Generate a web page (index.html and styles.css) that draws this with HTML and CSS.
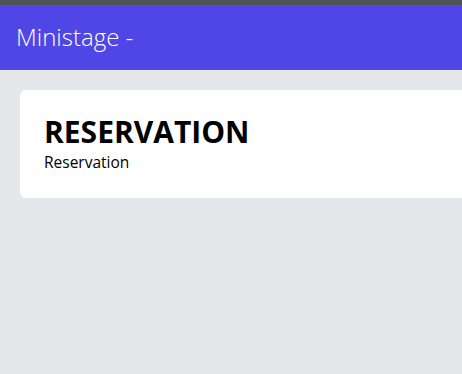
FILE: index.html
```html
<!DOCTYPE html>
<html>
<head>
<meta charset="utf-8">
<link rel="stylesheet" href="styles.css">
</head>
<body>
<div class="topbar"></div>
<header class="header">
  <h1 class="brand">Ministage -</h1>
</header>
<main class="main">
  <section class="card">
    <h2 class="card-title">RESERVATION</h2>
    <p class="card-sub">Reservation</p>
  </section>
</main>
</body>
</html>
```
FILE: styles.css
```css
html, body {
  margin: 0;
  padding: 0;
}
body {
  width: 462px;
  height: 374px;
  overflow: hidden;
  background: #e5e7eb;
  font-family: "Open Sans", "Noto Sans", sans-serif;
  color: #000;
}
.topbar {
  height: 5px;
  background: #4f5358;
}
.header {
  height: 65px;
  box-sizing: border-box;
  padding: 16px 16px;
  background: #4f46e5;
}
.brand {
  margin: 0;
  font-size: 24px;
  line-height: 32px;
  font-weight: 300;
  color: #fff;
}
.main {
  padding: 20px;
}
.card {
  width: 620px;
  box-sizing: border-box;
  background: #fff;
  border-radius: 6px;
  padding: 24px;
}
.card-title {
  margin: 0;
  font-size: 30px;
  line-height: 36px;
  font-weight: 700;
}
.card-sub {
  margin: 0;
  font-size: 15.5px;
  line-height: 24px;
}
```
